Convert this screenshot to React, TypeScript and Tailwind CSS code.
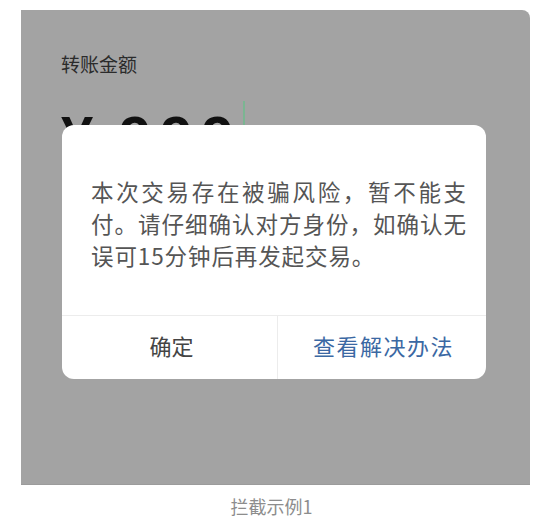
import React from 'react'

const cjk = "font-['Noto_Sans_CJK_SC','Noto_Sans',sans-serif]"

function TransferScreen() {
  return (
    <div className="relative ml-[21px] mt-[10px] h-[475px] w-[509px] rounded-tr-[8px] border-b border-[#9b9b9b] bg-[#a3a3a3] pl-[40px] pt-[42px]">
      {/* dimmed transfer page behind the dialog */}
      <div className={`${cjk} text-[19px] leading-[24px] text-[#2b2b2b]`}>转账金额</div>
      <div className="mt-[32px] flex items-start font-['Liberation_Sans',sans-serif] text-[58px] font-bold leading-[58px] text-[#111]">
        <span className="w-[32px]">¥</span>
        <span className="ml-[26px] tracking-[9px]">999</span>
        <div className="mt-[-7px] h-[60px] w-[2px] bg-[#7bb592]" />
      </div>

      {/* alert dialog */}
      <div className="absolute left-[41px] top-[115px] w-[424px] overflow-hidden rounded-[12px] bg-white">
        <div className={`${cjk} h-[190px] break-all pl-[29px] pr-[19px] pt-[50px] text-justify text-[22.5px] leading-[32px] tracking-[0.9px] text-[#555]`}>
          本次交易存在被骗风险，暂不能支付。请仔细确认对方身份，如确认无误可15分钟后再发起交易。
        </div>
        <div className={`${cjk} flex h-[64px] border-t border-[#ececec] text-[22px]`}>
          <div className="flex w-[216px] items-center justify-center border-r border-[#ececec] pb-[4px] pl-[4px] text-[#444]">
            确定
          </div>
          <div className="flex flex-1 items-center justify-center pb-[4px] pl-[3px] tracking-[1.5px] text-[#3b68a3]">
            查看解决办法
          </div>
        </div>
      </div>
    </div>
  )
}

export default function App() {
  return (
    <div className="h-[532px] w-[553px] bg-white">
      <TransferScreen />
      <div className={`${cjk} mt-[9px] pr-[10px] text-center text-[18px] leading-[24px] text-[#8d8d8d]`}>
        拦截示例1
      </div>
    </div>
  )
}
